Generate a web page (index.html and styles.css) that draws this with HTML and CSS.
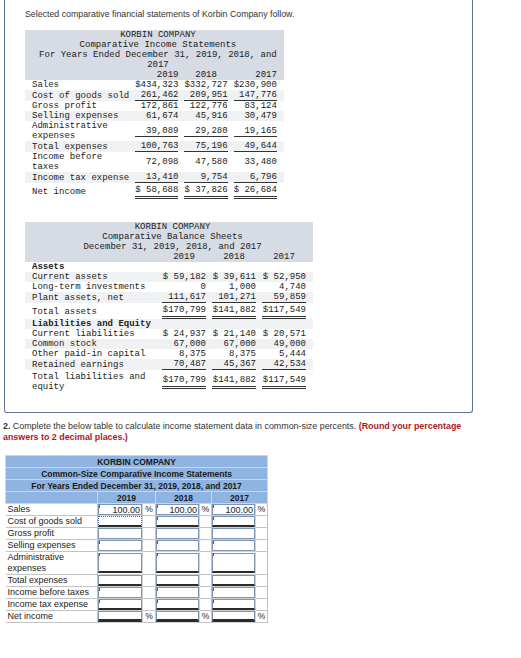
FILE: index.html
```html
<!DOCTYPE html>
<html lang="en">

<head>
    <meta charset="UTF-8">
    <meta name="viewport" content="width=device-width, initial-scale=1.0">
    <title>Korbin Company</title>
    <link rel="stylesheet" href="styles.css">
</head>

<body>

    <div class="frame">
        <p class="intro">Selected comparative financial statements of Korbin Company follow.</p>

        <table class="stmt income">
            <thead>
                <tr class="head">
                    <td colspan="4">KORBIN COMPANY<br>Comparative Income Statements<br>For Years Ended December 31, 2019, 2018, and 2017</td>
                </tr>
                <tr class="head years">
                    <td></td>
                    <td class="num">2019</td>
                    <td class="num mid">2018</td>
                    <td class="num">2017</td>
                </tr>
            </thead>
            <tbody>
                <tr>
                    <td>Sales</td>
                    <td class="num">$434,323</td>
                    <td class="num">$332,727</td>
                    <td class="num">$230,900</td>
                </tr>
                <tr>
                    <td>Cost of goods sold</td>
                    <td class="num"><span class="ul">261,462</span></td>
                    <td class="num"><span class="ul">209,951</span></td>
                    <td class="num"><span class="ul">147,776</span></td>
                </tr>
                <tr>
                    <td>Gross profit</td>
                    <td class="num">172,861</td>
                    <td class="num">122,776</td>
                    <td class="num">83,124</td>
                </tr>
                <tr>
                    <td>Selling expenses</td>
                    <td class="num">61,674</td>
                    <td class="num">45,916</td>
                    <td class="num">30,479</td>
                </tr>
                <tr>
                    <td>Administrative<br>expenses</td>
                    <td class="num"><span class="ul">39,089</span></td>
                    <td class="num"><span class="ul">29,280</span></td>
                    <td class="num"><span class="ul">19,165</span></td>
                </tr>
                <tr>
                    <td>Total expenses</td>
                    <td class="num"><span class="ul">100,763</span></td>
                    <td class="num"><span class="ul">75,196</span></td>
                    <td class="num"><span class="ul">49,644</span></td>
                </tr>
                <tr>
                    <td>Income before<br>taxes</td>
                    <td class="num">72,098</td>
                    <td class="num">47,580</td>
                    <td class="num">33,480</td>
                </tr>
                <tr>
                    <td>Income tax expense</td>
                    <td class="num"><span class="ul">13,410</span></td>
                    <td class="num"><span class="ul">9,754</span></td>
                    <td class="num"><span class="ul">6,796</span></td>
                </tr>
                <tr class="total">
                    <td>Net income</td>
                    <td class="num"><span class="dl">$ 58,688</span></td>
                    <td class="num"><span class="dl">$ 37,826</span></td>
                    <td class="num"><span class="dl">$ 26,684</span></td>
                </tr>
            </tbody>
        </table>

        <table class="stmt balance">
            <thead>
                <tr class="head">
                    <td colspan="4">KORBIN COMPANY<br>Comparative Balance Sheets<br>December 31, 2019, 2018, and 2017</td>
                </tr>
                <tr class="head years">
                    <td></td>
                    <td class="num mid">2019</td>
                    <td class="num mid">2018</td>
                    <td class="num mid">2017</td>
                </tr>
            </thead>
            <tbody>
                <tr>
                    <td class="sub" colspan="4">Assets</td>
                </tr>
                <tr>
                    <td>Current assets</td>
                    <td class="num">$ 59,182</td>
                    <td class="num">$ 39,611</td>
                    <td class="num">$ 52,950</td>
                </tr>
                <tr>
                    <td>Long-term investments</td>
                    <td class="num">0</td>
                    <td class="num">1,000</td>
                    <td class="num">4,740</td>
                </tr>
                <tr>
                    <td>Plant assets, net</td>
                    <td class="num"><span class="ul">111,617</span></td>
                    <td class="num"><span class="ul">101,271</span></td>
                    <td class="num"><span class="ul">59,859</span></td>
                </tr>
                <tr class="total">
                    <td>Total assets</td>
                    <td class="num"><span class="dl">$170,799</span></td>
                    <td class="num"><span class="dl">$141,882</span></td>
                    <td class="num"><span class="dl">$117,549</span></td>
                </tr>
                <tr>
                    <td class="sub" colspan="4">Liabilities and Equity</td>
                </tr>
                <tr>
                    <td>Current liabilities</td>
                    <td class="num">$ 24,937</td>
                    <td class="num">$ 21,140</td>
                    <td class="num">$ 20,571</td>
                </tr>
                <tr>
                    <td>Common stock</td>
                    <td class="num">67,000</td>
                    <td class="num">67,000</td>
                    <td class="num">49,000</td>
                </tr>
                <tr>
                    <td>Other paid-in capital</td>
                    <td class="num">8,375</td>
                    <td class="num">8,375</td>
                    <td class="num">5,444</td>
                </tr>
                <tr>
                    <td>Retained earnings</td>
                    <td class="num"><span class="ul">70,487</span></td>
                    <td class="num"><span class="ul">45,367</span></td>
                    <td class="num"><span class="ul">42,534</span></td>
                </tr>
                <tr class="total">
                    <td>Total liabilities and<br>equity</td>
                    <td class="num"><span class="dl">$170,799</span></td>
                    <td class="num"><span class="dl">$141,882</span></td>
                    <td class="num"><span class="dl">$117,549</span></td>
                </tr>
            </tbody>
        </table>
    </div>

    <p class="task"><b>2.</b> Complete the below table to calculate income statement data in common-size percents. <span class="round">(Round your percentage answers to 2 decimal places.)</span></p>

    <table class="cs">
        <colgroup>
            <col class="c-lbl">
            <col class="c-in">
            <col class="c-pc">
            <col class="c-in2">
            <col class="c-pc2">
            <col class="c-in2">
            <col class="c-pc2">
        </colgroup>
        <tr class="h">
            <th colspan="7">KORBIN COMPANY</th>
        </tr>
        <tr class="h">
            <th colspan="7">Common-Size Comparative Income Statements</th>
        </tr>
        <tr class="h">
            <th colspan="7">For Years Ended December 31, 2019, 2018, and 2017</th>
        </tr>
        <tr class="h yr">
            <th></th>
            <th colspan="2">2019</th>
            <th colspan="2">2018</th>
            <th colspan="2">2017</th>
        </tr>
        <tr>
            <td class="lbl">Sales</td>
            <td class="in tick"><input type="text" value="100.00"></td>
            <td class="pc">%</td>
            <td class="in tick"><input type="text" value="100.00"></td>
            <td class="pc">%</td>
            <td class="in tick"><input type="text" value="100.00"></td>
            <td class="pc">%</td>
        </tr>
        <tr class="ul">
            <td class="lbl">Cost of goods sold</td>
            <td class="in focus"><input type="text"></td>
            <td class="pc"></td>
            <td class="in tick"><input type="text"></td>
            <td class="pc"></td>
            <td class="in tick"><input type="text"></td>
            <td class="pc"></td>
        </tr>
        <tr>
            <td class="lbl">Gross profit</td>
            <td class="in"><input type="text"></td>
            <td class="pc"></td>
            <td class="in"><input type="text"></td>
            <td class="pc"></td>
            <td class="in"><input type="text"></td>
            <td class="pc"></td>
        </tr>
        <tr>
            <td class="lbl">Selling expenses</td>
            <td class="in tick"><input type="text"></td>
            <td class="pc"></td>
            <td class="in tick"><input type="text"></td>
            <td class="pc"></td>
            <td class="in tick"><input type="text"></td>
            <td class="pc"></td>
        </tr>
        <tr class="ul tall">
            <td class="lbl">Administrative expenses</td>
            <td class="in tick"><input type="text"></td>
            <td class="pc"></td>
            <td class="in tick"><input type="text"></td>
            <td class="pc"></td>
            <td class="in tick"><input type="text"></td>
            <td class="pc"></td>
        </tr>
        <tr class="ul">
            <td class="lbl">Total expenses</td>
            <td class="in"><input type="text"></td>
            <td class="pc"></td>
            <td class="in"><input type="text"></td>
            <td class="pc"></td>
            <td class="in"><input type="text"></td>
            <td class="pc"></td>
        </tr>
        <tr>
            <td class="lbl">Income before taxes</td>
            <td class="in tick"><input type="text"></td>
            <td class="pc"></td>
            <td class="in tick"><input type="text"></td>
            <td class="pc"></td>
            <td class="in tick"><input type="text"></td>
            <td class="pc"></td>
        </tr>
        <tr class="ul">
            <td class="lbl">Income tax expense</td>
            <td class="in tick"><input type="text"></td>
            <td class="pc"></td>
            <td class="in tick"><input type="text"></td>
            <td class="pc"></td>
            <td class="in tick"><input type="text"></td>
            <td class="pc"></td>
        </tr>
        <tr class="ul net">
            <td class="lbl">Net income</td>
            <td class="in"><input type="text"></td>
            <td class="pc">%</td>
            <td class="in"><input type="text"></td>
            <td class="pc">%</td>
            <td class="in"><input type="text"></td>
            <td class="pc">%</td>
        </tr>
    </table>

</body>

</html>
```

FILE: styles.css
```css
body {
    margin: 0;
    font-family: "Liberation Sans", Arial, sans-serif;
    color: #333;
    background: #fff;
}

.frame {
    width: 447px;
    margin-left: 4px;
    padding: 9px 0 20px 20px;
    border: 1px solid #5b7497;
    border-top: none;
    border-radius: 0 0 3px 3px;
}

.intro {
    margin: 0 0 10px;
    font-size: 8.8px;
    line-height: 11px;
}

/* statements drawn in monospace, like the source */
.stmt {
    border-collapse: collapse;
    font-family: "Liberation Mono", "Courier New", monospace;
    font-size: 9px;
    line-height: 10px;
    color: #222;
}

.stmt td {
    padding: 0;
    white-space: nowrap;
    vertical-align: middle;
}

.stmt td:first-child {
    padding-left: 7px;
}

.stmt .head td {
    background: #d6dbe4;
    text-align: center;
    white-space: normal;
}

.stmt .head td.num {
    text-align: right;
}

.stmt .head td.mid {
    text-align: center;
}

.stmt tbody tr:nth-child(even) {
    background: #f0f1f3;
}

.stmt .num {
    text-align: right;
    width: 44px;
    padding-left: 6px;
}

.stmt .num:last-child {
    padding-right: 7px;
}

.stmt .ul {
    display: block;
    border-bottom: 1px solid #333;
}

.stmt .dl {
    display: block;
    padding-bottom: 1px;
    border-bottom: 3px double #333;
}

.stmt .sub {
    font-weight: bold;
}

.income {
    width: 258px;
}

.income tbody td:first-child {
    width: 93px;
}

.income .total td {
    padding-top: 2px;
}

.balance {
    width: 288px;
    margin-top: 23px;
}

.balance .total td {
    padding-top: 2px;
}

.task {
    margin: 8px 0 0 3px;
    width: 470px;
    font-size: 8.9px;
    line-height: 11px;
    color: #333;
}

.round {
    color: #b0161e;
    font-weight: bold;
}

/* common-size worksheet */
.cs {
    margin: 12px 0 0 5px;
    border-collapse: collapse;
    table-layout: fixed;
    width: 262px;
    font-size: 9px;
    color: #222;
}

.c-lbl {
    width: 92px;
}

.c-in {
    width: 45px;
}

.c-pc {
    width: 13px;
}

.c-in2 {
    width: 44px;
}

.c-pc2 {
    width: 12px;
}

.cs th {
    height: 11px;
    padding: 0;
    background: #8fb4e2;
    border: 1px solid #c9d6e6;
    font-size: 8.5px;
    line-height: 10px;
    color: #1a1a1a;
}

.cs td {
    height: 11px;
    padding: 0;
    border: 1px solid #c3c3c3;
    line-height: 11px;
}

.cs .lbl {
    padding-left: 2px;
    border-left: none;
}

.cs .pc {
    text-align: center;
    font-size: 8.5px;
}

.cs .in {
    position: relative;
    border-color: #d0d0d0;
}

.cs .in input {
    display: block;
    box-sizing: border-box;
    width: 100%;
    height: 11px;
    margin: 0;
    padding: 0 1px;
    border: 1px solid #7f95b3;
    border-radius: 0;
    font: 9px "Liberation Sans", Arial, sans-serif;
    color: #222;
    text-align: right;
    background: #fff;
}

.cs .tall input {
    height: 20px;
}

.cs .ul .in input {
    border-bottom: 2px solid #2b2b2b;
}

.cs .net .in input {
    border-bottom: 3px solid #2b2b2b;
}

.cs .focus input {
    border: 1px dotted #3f63a6;
}

.cs .tick::before {
    content: "";
    position: absolute;
    top: 1px;
    left: 1px;
    width: 1px;
    height: 3px;
    background: #2f62c4;
}
```
